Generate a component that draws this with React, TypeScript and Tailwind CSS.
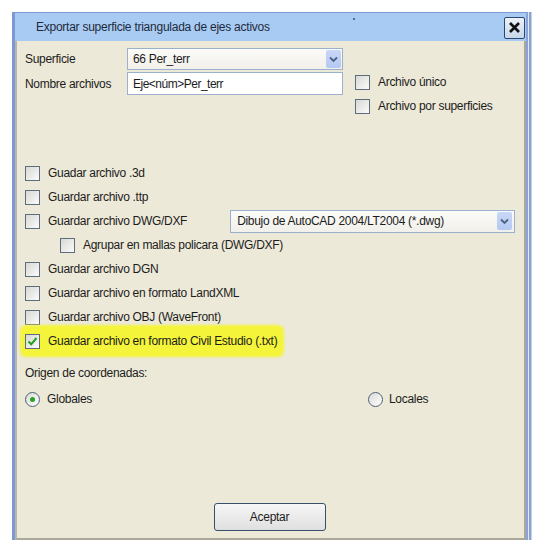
import React from "react";

const font = { fontFamily: '"Liberation Sans", Arial, sans-serif' };

function Check({ checked = false }: { checked?: boolean }) {
  return (
    <div className="w-[15px] h-[15px] shrink-0 border border-[#5f6c7b] bg-gradient-to-br from-[#d8d8d4] to-[#fbfbfa] flex items-center justify-center">
      {checked && (
        <svg width="11" height="11" viewBox="0 0 11 11">
          <path d="M1.5 5.5 L4.2 8.3 L9.5 2" fill="none" stroke="#20a020" strokeWidth="2" />
        </svg>
      )}
    </div>
  );
}

function Radio({ checked = false }: { checked?: boolean }) {
  return (
    <div className="w-[15px] h-[15px] shrink-0 rounded-full border border-[#4f6176] bg-gradient-to-br from-[#dadad5] to-[#ffffff] flex items-center justify-center">
      {checked && <div className="w-[5px] h-[5px] rounded-full bg-[#2aa22a]" />}
    </div>
  );
}

function Chevron() {
  return (
    <div className="w-[15px] h-[18px] bg-gradient-to-b from-[#c9d8f8] to-[#b4c8f2] rounded-[2px] flex items-center justify-center">
      <svg width="9" height="7" viewBox="0 0 9 7">
        <path d="M1 1.5 L4.5 5 L8 1.5" fill="none" stroke="#4d6185" strokeWidth="1.8" />
      </svg>
    </div>
  );
}

function Row({ label, indent = false, children, highlight = false, checked = false }: { label: string; indent?: boolean; children?: React.ReactNode; highlight?: boolean; checked?: boolean }) {
  return (
    <div className={`h-[24px] flex items-center ${indent ? "pl-[43px]" : "pl-[8px]"}`}>
      <div className="relative flex items-center gap-[8px]">
        {highlight && <div className="absolute left-[-5px] right-[-7px] top-[-7px] bottom-[-7px] bg-[#f4f43a] rounded-[6px] blur-[1px]" />}
        <div className="relative"><Check checked={checked} /></div>
        <span className="relative text-[12px] text-[#1c1c1c] tracking-[-0.3px] whitespace-nowrap">{label}</span>
      </div>
      {children}
    </div>
  );
}

export default function App() {
  return (
    <div className="w-[541px] h-[550px] bg-white pt-[12px] pl-[12px]" style={font}>
      <div className="w-[520px] h-[528px] flex">
        <div className="flex-1 flex flex-col border-l-[3px] border-t border-[#7c98d5]">
          {/* title bar */}
          <div className="h-[28px] bg-[#a8cbf3] flex items-center pl-[21px] pr-[1px] relative">
            <span className="text-[12px] text-[#1e2a3a] tracking-[-0.25px]">Exportar superficie triangulada de ejes activos</span>
            <div className="absolute left-[338px] top-[5px] w-[2px] h-[2px] bg-[#3a4a66] rounded-full" />
            <div className="ml-auto w-[21px] h-[22px] mt-[1px] border-[1.5px] border-[#2b4770] rounded-[2px] bg-gradient-to-b from-[#eef2f8] to-[#c7d6ea] flex items-center justify-center">
              <svg width="13" height="13" viewBox="0 0 13 13">
                <path d="M2 2 L11 11 M11 2 L2 11" stroke="#111" strokeWidth="2.6" />
              </svg>
            </div>
          </div>
          {/* body */}
          <div className="flex-1 bg-[#ece9d8] border-l-2 border-r-2 border-b-2 border-l-[#b8b6ac] border-r-[#a9a799] border-b-[#aca899] flex flex-col">
            <div className="flex pt-[7px]">
              <div className="flex flex-col gap-[2px] pl-[8px]">
                <div className="flex items-center h-[22px]">
                  <span className="w-[102px] text-[12px] text-[#1c1c1c] tracking-[-0.3px]">Superficie</span>
                  <div className="w-[216px] h-[22px] border border-[#9bb0cf] bg-gradient-to-b from-[#fbfbf8] to-[#f1f0ea] flex items-center pl-[5px] pr-[1px]">
                    <span className="text-[12px] text-[#1c1c1c] tracking-[-0.3px] flex-1">66 Per_terr</span>
                    <Chevron />
                  </div>
                </div>
                <div className="flex items-center h-[23px]">
                  <span className="w-[102px] text-[12px] text-[#1c1c1c] tracking-[-0.3px]">Nombre archivos</span>
                  <div className="w-[216px] h-[23px] border border-[#9bb0cf] bg-white flex items-center pl-[5px]">
                    <span className="text-[12px] text-[#1c1c1c] tracking-[-0.5px]">Eje&lt;núm&gt;Per_terr</span>
                  </div>
                </div>
              </div>
              <div className="flex flex-col pl-[12px] pt-[26px] gap-[8px]">
                <div className="flex items-center gap-[8px] h-[16px]">
                  <Check />
                  <span className="text-[12px] text-[#1c1c1c] tracking-[-0.3px]">Archivo único</span>
                </div>
                <div className="flex items-center gap-[8px] h-[16px]">
                  <Check />
                  <span className="text-[12px] text-[#1c1c1c] tracking-[-0.3px]">Archivo por superficies</span>
                </div>
              </div>
            </div>

            <div className="flex flex-col mt-[47px]">
              <Row label="Guadar archivo .3d" />
              <Row label="Guardar archivo .ttp" />
              <Row label="Guardar archivo DWG/DXF">
                <div className="ml-[43px] w-[285px] h-[23px] border border-[#9bb0cf] bg-gradient-to-b from-[#fbfbf8] to-[#f1f0ea] flex items-center pl-[6px] pr-[2px]">
                  <span className="text-[12px] text-[#1c1c1c] tracking-[-0.3px] flex-1">Dibujo de AutoCAD 2004/LT2004 (*.dwg)</span>
                  <Chevron />
                </div>
              </Row>
              <Row label="Agrupar en mallas policara (DWG/DXF)" indent />
              <Row label="Guardar archivo DGN" />
              <Row label="Guardar archivo en formato LandXML" />
              <Row label="Guardar archivo OBJ (WaveFront)" />
              <Row label="Guardar archivo en formato Civil Estudio (.txt)" highlight checked />
            </div>

            <div className="pl-[8px] mt-[12px] h-[16px] flex items-center text-[12px] text-[#1c1c1c] tracking-[-0.3px]">Origen de coordenadas:</div>
            <div className="flex items-center pl-[8px] mt-[10px] h-[16px]">
              <div className="flex items-center gap-[7px] w-[343px]">
                <Radio checked />
                <span className="text-[12px] text-[#1c1c1c] tracking-[-0.3px]">Globales</span>
              </div>
              <div className="flex items-center gap-[6px]">
                <Radio />
                <span className="text-[12px] text-[#1c1c1c] tracking-[-0.3px]">Locales</span>
              </div>
            </div>

            <div className="mt-auto pb-[7px] flex justify-center pr-[2px]">
              <div className="w-[112px] h-[28px] border border-[#35506d] rounded-[3px] bg-gradient-to-b from-[#f6f6f6] to-[#e0e0e0] flex items-center justify-center">
                <span className="text-[12px] text-[#1c1c1c] tracking-[-0.3px]">Aceptar</span>
              </div>
            </div>
          </div>
        </div>
        {/* right frame */}
        <div className="w-[2px] bg-[#8aa2d8]" />
        <div className="w-[1px] bg-[#e2e8f6]" />
        <div className="w-[2px] bg-[#8aa2d8]" />
        <div className="w-[1px] bg-[#c4cfe8]" />
      </div>
    </div>
  );
}
